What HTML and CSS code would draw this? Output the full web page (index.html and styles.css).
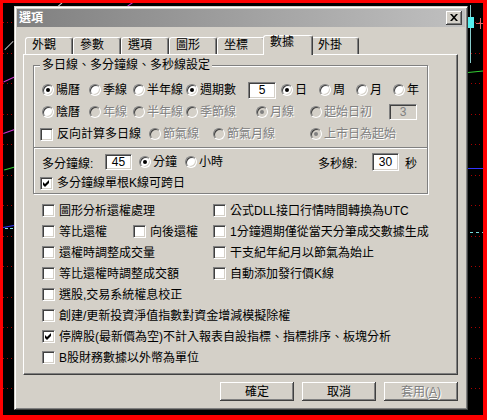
FILE: index.html
```html
<!doctype html>
<html lang="zh-Hant">
    <head>
        <title>選項</title>
        <meta charset="utf-8">
        <link rel="stylesheet" href="styles.css">
    </head>
    <body>
        <div class="screen">
            <!-- chart behind the dialog -->
            <div class="chart">
                <div class="grid"></div>
                <i class="seg s-top1"></i>
                <i class="seg s-top2"></i>
                <i class="seg s-white"></i>
                <i class="seg s-mag1"></i>
                <i class="seg s-mag2"></i>
                <i class="seg s-green1"></i>
                <i class="seg s-blue1"></i>
                <i class="seg s-dash1"></i>
                <i class="seg s-green2"></i>
                <i class="seg s-blue2"></i>
                <i class="seg s-dash2"></i>
                <i class="seg s-axis"></i>
                <i class="seg s-cyan"></i>
                <i class="seg s-cross-h"></i>
                <i class="seg s-cross-v"></i>
            </div>

            <div class="dialog">
                <div class="titlebar">
                    <span>選項</span>
                    <button class="close" aria-label="close">
                        <svg width="8" height="7" viewBox="0 0 8 7"><path d="M0 0h2l2 2.3L6 0h2L5 3.5 8 7H6L4 4.7 2 7H0l3-3.5z"/></svg>
                    </button>
                </div>

                <div class="dlg-body">
                    <div class="tabs">
                        <div class="tab">外觀</div>
                        <div class="tab">參數</div>
                        <div class="tab">選項</div>
                        <div class="tab">圖形</div>
                        <div class="tab">坐標</div>
                        <div class="tab sel">數據</div>
                        <div class="tab">外掛</div>
                    </div>

                    <div class="panel">
                        <div class="group">
                            <div class="legend">多日線、多分鐘線、多秒線設定</div>

                            <div class="row r-radio">
                                <label class="opt w47"><span class="rb on"></span>陽曆</label>
                                <label class="opt w44"><span class="rb"></span>季線</label>
                                <label class="opt w53"><span class="rb"></span>半年線</label>
                                <label class="opt w62"><span class="rb on"></span>週期數</label>
                                <span class="num n-day">5</span>
                                <label class="opt w38"><span class="rb on"></span>日</label>
                                <label class="opt w37"><span class="rb"></span>周</label>
                                <label class="opt w37"><span class="rb"></span>月</label>
                                <label class="opt"><span class="rb"></span>年</label>
                            </div>
                            <div class="row r-radio">
                                <label class="opt w47"><span class="rb"></span>陰曆</label>
                                <label class="opt w44 dis"><span class="rb"></span>年線</label>
                                <label class="opt w53 dis"><span class="rb"></span>半年線</label>
                                <label class="opt w70 dis"><span class="rb"></span>季節線</label>
                                <label class="opt w54 dis"><span class="rb on"></span>月線</label>
                                <label class="opt w79 dis"><span class="rb"></span>起始日初</label>
                                <span class="num off">3</span>
                            </div>
                            <div class="row r-check">
                                <label class="opt w109"><span class="cb"></span>反向計算多日線</label>
                                <label class="opt w64 dis"><span class="rb"></span>節氣線</label>
                                <label class="opt w97 dis"><span class="rb"></span>節氣月線</label>
                                <label class="opt dis"><span class="rb on"></span>上市日為起始</label>
                            </div>

                            <div class="sep"></div>

                            <div class="row r-radio r-min">
                                <span class="w63">多分鐘線:</span>
                                <span class="num n-min">45</span>
                                <label class="opt w46"><span class="rb on"></span>分鐘</label>
                                <label class="opt"><span class="rb"></span>小時</label>
                                <div class="sec">
                                    <span class="w54">多秒線:</span>
                                    <span class="num n-sec">30</span>
                                    <span>秒</span>
                                </div>
                            </div>
                            <div class="row r-check r-last">
                                <label class="opt"><span class="cb on"><svg width="11" height="11" viewBox="0 0 11 11"><path d="M2 4l2 2 4-4v3l-4 4-2-2z"/></svg></span>多分鐘線單根K線可跨日</label>
                            </div>
                        </div>

                        <div class="checks">
                            <label class="opt"><span class="cb"></span>圖形分析還權處理</label>
                            <label class="opt"><span class="cb"></span>公式DLL接口行情時間轉換為UTC</label>

                            <div class="pair">
                                <label class="opt w91"><span class="cb"></span>等比還權</label>
                                <label class="opt"><span class="cb"></span>向後還權</label>
                            </div>
                            <label class="opt"><span class="cb"></span>1分鐘週期僅從當天分筆成交數據生成</label>

                            <label class="opt"><span class="cb"></span>還權時調整成交量</label>
                            <label class="opt"><span class="cb"></span>干支紀年紀月以節氣為始止</label>

                            <label class="opt"><span class="cb"></span>等比還權時調整成交額</label>
                            <label class="opt"><span class="cb"></span>自動添加發行價K線</label>

                            <label class="opt wide"><span class="cb"></span>選股,交易系統權息校正</label>
                            <label class="opt wide"><span class="cb"></span>創建/更新投資淨值指數對資金增減模擬除權</label>
                            <label class="opt wide"><span class="cb on"><svg width="11" height="11" viewBox="0 0 11 11"><path d="M2 4l2 2 4-4v3l-4 4-2-2z"/></svg></span>停牌股(最新價為空)不計入報表自設指標、指標排序、板塊分析</label>
                            <label class="opt wide"><span class="cb"></span>B股財務數據以外幣為單位</label>
                        </div>
                    </div>

                    <div class="buttons">
                        <button class="btn">確定</button>
                        <button class="btn">取消</button>
                        <button class="btn" disabled>套用(<u>A</u>)</button>
                    </div>
                </div>
            </div>
        </div>
    </body>
</html>
```

FILE: styles.css
```css
* {
    box-sizing: border-box;
}
body {
    margin: 0;
    background: #000;
    font-family: "Liberation Sans", "Noto Sans CJK TC", sans-serif;
    font-size: 12px;
    color: #000;
}
.screen {
    position: relative;
    width: 487px;
    height: 420px;
    background: #000;
    border-style: solid;
    border-color: #f00;
    border-width: 3px 4px 5px 3px;
    padding: 3px 0 0 11px;
    overflow: hidden;
}

/* chart in the background */
.chart {
    position: absolute;
    inset: 0;
}
.grid {
    position: absolute;
    inset: 0;
    background-image: repeating-linear-gradient(90deg, #a00 0 1px, transparent 1px 4px);
    -webkit-mask-image: repeating-linear-gradient(180deg, transparent 0 19px, #000 19px 20px, transparent 20px 30.5px);
    mask-image: repeating-linear-gradient(180deg, transparent 0 19px, #000 19px 20px, transparent 20px 30.5px);
}
.seg {
    position: absolute;
    height: 1px;
}
.s-top1 { left: 52px; top: 2px; width: 8px; background: #ddd; transform: rotate(-40deg); }
.s-top2 { left: 122px; top: 1px; width: 10px; background: #c3c; transform: rotate(-35deg); }
.s-white { left: 0; top: 42px; width: 12px; background: #ccc; transform: rotate(-45deg); }
.s-mag1 { left: 0; top: 76px; width: 12px; background: #c3c; transform: rotate(-25deg); }
.s-mag2 { left: 0; top: 128px; width: 12px; background: #c3c; transform: rotate(-20deg); }
.s-green1 { left: 1px; top: 165px; width: 11px; background: #3c3; transform: rotate(-15deg); }
.s-blue1 { left: 0; top: 223px; width: 11px; background: #33f; transform: rotate(-10deg); }
.s-dash1 { left: 2px; top: 225px; width: 9px; background: repeating-linear-gradient(90deg, #7dd 0 3px, transparent 3px 5px); }
.s-green2 { left: 465px; top: 68px; width: 20px; background: #3c3; transform: rotate(-6deg); }
.s-blue2 { left: 465px; top: 165px; width: 20px; background: #33f; }
.s-dash2 { left: 467px; top: 229px; width: 18px; background: repeating-linear-gradient(90deg, #7dd 0 3px, transparent 3px 6px); }
.s-axis { left: 467px; top: 2px; width: 1px; height: 58px; background: #8cc; }
.s-cyan { left: 465px; top: 14px; width: 6px; height: 11px; background: #5ee; }
.s-cross-h { left: 473px; top: 20px; width: 8px; background: #d66; }
.s-cross-v { left: 477px; top: 15px; width: 1px; height: 11px; background: #d66; }

/* dialog */
.dialog {
    position: relative;
    width: 454px;
    height: 404px;
    padding: 2px;
    background: #d4d0c8;
    border: 1px solid;
    border-color: #d4d0c8 #404040 #404040 #d4d0c8;
    box-shadow: inset 1px 1px #fff, inset -1px -1px #808080;
}
.titlebar {
    display: flex;
    align-items: center;
    justify-content: space-between;
    height: 18px;
    padding: 0 3px 0 2px;
    background: linear-gradient(90deg, #808080, #c0c0c0);
    color: #fff;
    font-weight: bold;
    line-height: 14px;
}
.close {
    display: flex;
    align-items: center;
    justify-content: center;
    width: 16px;
    height: 14px;
    padding: 0;
    border: 0;
    background: #d4d0c8;
    box-shadow: inset -1px -1px #404040, inset 1px 1px #fff, inset -2px -2px #808080, inset 2px 2px #d4d0c8;
}
.close svg {
    display: block;
    margin: 0 0 1px 0;
}
.dlg-body {
    padding: 8px 7px 0 6px;
}

/* tabs */
.tabs {
    display: flex;
    align-items: flex-end;
    height: 19px;
    padding-left: 2px;
}
.tab {
    width: 48px;
    height: 17px;
    padding-left: 6px;
    line-height: 14px;
    border: 1px solid;
    border-bottom: 0;
    border-color: #fff #404040 transparent #fff;
    border-radius: 3px 3px 0 0;
    box-shadow: inset -1px 0 #808080;
    background: #d4d0c8;
}
.tab.sel {
    position: relative;
    z-index: 1;
    width: 50px;
    height: 20px;
    margin: 0 -2px -1px;
    padding-left: 6px;
    line-height: 12px;
}
.panel {
    height: 321px;
    padding: 3px 0 0 9px;
    border: 1px solid;
    border-color: #fff #404040 #404040 #fff;
    box-shadow: inset -1px -1px #808080;
}

/* group box */
.group {
    width: 395px;
    margin-top: 7px;
    border: 1px solid #808080;
    box-shadow: inset 1px 1px #fff, 1px 1px #fff;
}
.legend {
    width: max-content;
    margin: -8px 0 7px 6px;
    padding: 0 2px;
    line-height: 14px;
    background: #d4d0c8;
}
.row {
    display: flex;
    align-items: center;
    height: 22px;
    white-space: nowrap;
}
.r-radio {
    padding-left: 8px;
}
.r-check {
    padding-left: 6px;
}
.r-last {
    height: 20px;
}
.sep {
    height: 2px;
    margin: 2px 0;
    border-top: 1px solid #808080;
    border-bottom: 1px solid #fff;
}
.sec {
    display: flex;
    align-items: center;
    margin-left: auto;
    padding-right: 10px;
}

/* controls */
.opt {
    display: flex;
    align-items: center;
    flex: none;
    white-space: nowrap;
    line-height: 14px;
}
.dis {
    color: #808080;
    text-shadow: 1px 1px 0 #fff;
}
.rb {
    display: grid;
    place-items: center;
    flex: none;
    width: 12px;
    height: 12px;
    margin-right: 2px;
    border-radius: 50%;
    background: #fff;
    border: 1px solid;
    border-color: #808080 #fff #fff #808080;
    box-shadow: inset 1px 1px #404040, inset -1px -1px #d4d0c8;
}
.rb.on::after {
    content: "";
    width: 4px;
    height: 4px;
    border-radius: 50%;
    background: #000;
}
.dis .rb {
    background: #d4d0c8;
}
.dis .rb.on::after {
    background: #808080;
}
.cb {
    flex: none;
    width: 13px;
    height: 13px;
    margin-right: 4px;
    background: #fff;
    border: 1px solid;
    border-color: #808080 #fff #fff #808080;
    box-shadow: inset 1px 1px #404040, inset -1px -1px #d4d0c8;
}
.cb svg {
    display: block;
}
.num {
    flex: none;
    width: 28px;
    height: 17px;
    line-height: 15px;
    text-align: center;
    background: #fff;
    border: 1px solid;
    border-color: #808080 #fff #fff #808080;
    box-shadow: inset 1px 1px #404040, inset -1px -1px #d4d0c8;
}
.num.off {
    background: #d4d0c8;
    color: #808080;
    height: 16px;
    line-height: 14px;
}
.n-day {
    margin-right: 5px;
}
.n-min {
    width: 27px;
    height: 16px;
    line-height: 14px;
    margin-right: 7px;
}
.n-sec {
    width: 27px;
    height: 18px;
    line-height: 16px;
    margin: 0 6px 0 0;
}
.w37 { width: 37px; }
.w38 { width: 38px; }
.w44 { width: 44px; }
.w46 { width: 46px; }
.w47 { width: 47px; }
.w53 { width: 53px; }
.w54 { width: 54px; flex: none; }
.w62 { width: 62px; }
.w63 { width: 63px; flex: none; }
.w64 { width: 64px; }
.w70 { width: 70px; }
.w79 { width: 79px; }
.w91 { width: 91px; }
.w97 { width: 97px; }
.w109 { width: 109px; }

/* lower checkboxes */
.checks {
    display: grid;
    grid-template-columns: 171px 1fr;
    grid-auto-rows: 21px;
    align-items: center;
    margin: 6px 0 0 9px;
}
.pair {
    display: flex;
    align-items: center;
}
.wide {
    grid-column: 1 / -1;
}

/* buttons */
.buttons {
    display: flex;
    justify-content: flex-end;
    gap: 8px;
    margin-top: 7px;
}
.btn {
    width: 74px;
    height: 19px;
    padding: 0;
    border: 0;
    font: inherit;
    line-height: 14px;
    color: #000;
    background: #d4d0c8;
    box-shadow: inset -1px -1px #404040, inset 1px 1px #fff, inset -2px -2px #808080, inset 2px 2px #d4d0c8;
}
.btn:disabled {
    color: #808080;
    text-shadow: 1px 1px 0 #fff;
}
```
